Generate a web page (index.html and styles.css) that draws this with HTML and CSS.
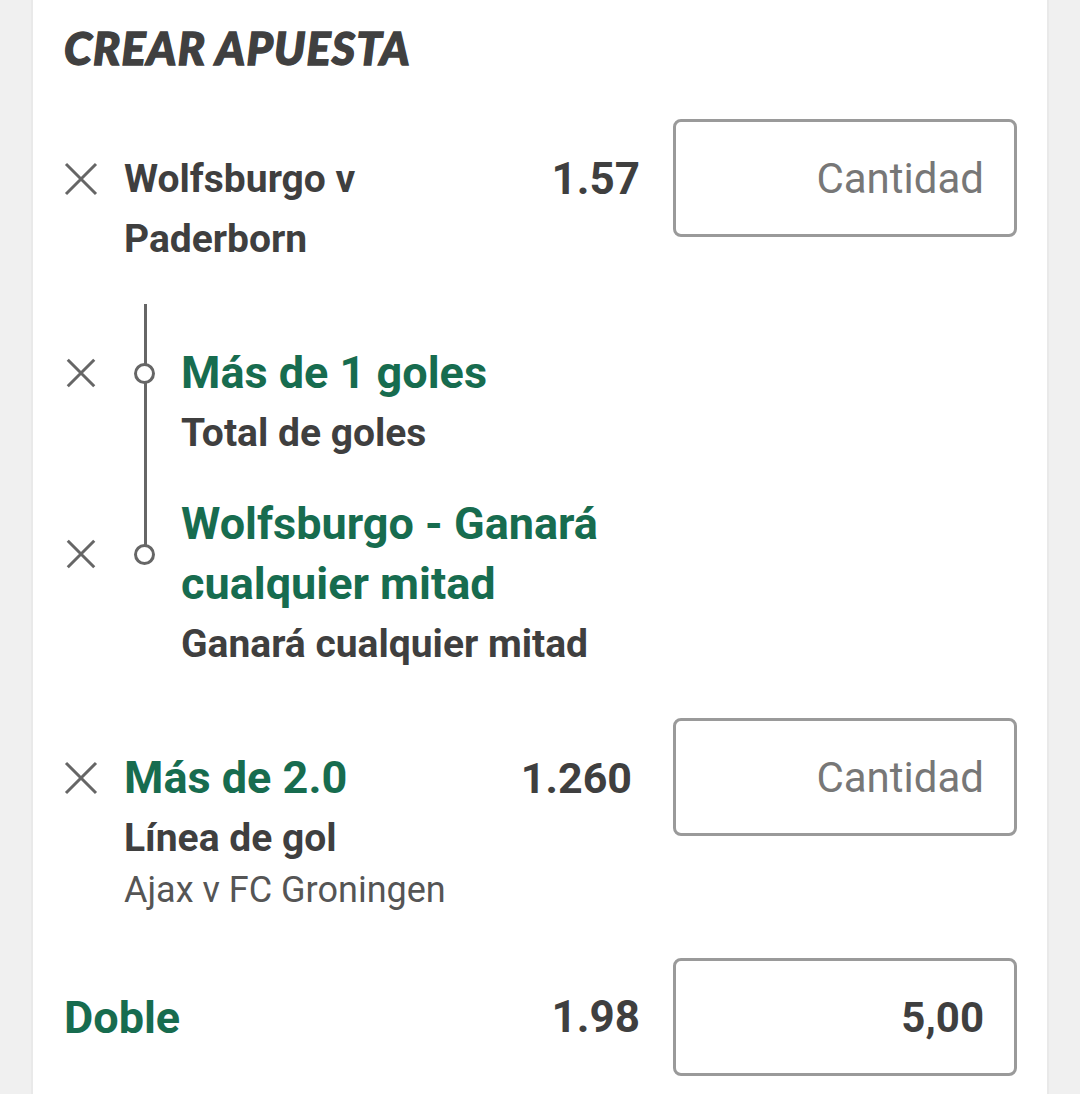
FILE: index.html
```html
<!DOCTYPE html>
<html lang="es">
<head>
    <meta charset="UTF-8">
    <meta name="viewport" content="width=device-width, initial-scale=1.0">
    <title>Crear apuesta</title>
    <link rel="stylesheet" href="styles.css">
</head>
<body>
    <div class="slip">
        <h1 class="slip-title">CREAR APUESTA</h1>

        <!-- Selección 1 -->
        <div class="bet">
            <button class="remove" type="button" aria-label="Quitar">
                <svg viewBox="0 0 34 34"><path d="M2 2 L32 32 M32 2 L2 32"/></svg>
            </button>
            <div class="bet-info">
                <div class="event">Wolfsburgo v Paderborn</div>
            </div>
            <div class="odds">1.57</div>
            <input class="stake" type="text" placeholder="Cantidad">
        </div>

        <div class="legs">
            <div class="leg">
                <button class="remove remove-sm" type="button" aria-label="Quitar">
                    <svg viewBox="0 0 34 34"><path d="M2 2 L32 32 M32 2 L2 32"/></svg>
                </button>
                <span class="node"></span>
                <div class="pick">Más de 1 goles</div>
                <div class="market">Total de goles</div>
            </div>
            <div class="leg">
                <button class="remove remove-sm" type="button" aria-label="Quitar">
                    <svg viewBox="0 0 34 34"><path d="M2 2 L32 32 M32 2 L2 32"/></svg>
                </button>
                <span class="node"></span>
                <div class="pick">Wolfsburgo - Ganará cualquier mitad</div>
                <div class="market">Ganará cualquier mitad</div>
            </div>
        </div>

        <!-- Selección 2 -->
        <div class="bet bet-second">
            <button class="remove" type="button" aria-label="Quitar">
                <svg viewBox="0 0 34 34"><path d="M2 2 L32 32 M32 2 L2 32"/></svg>
            </button>
            <div class="bet-info">
                <div class="pick">Más de 2.0</div>
                <div class="market">Línea de gol</div>
                <div class="match">Ajax v FC Groningen</div>
            </div>
            <div class="odds odds-long">1.260</div>
            <input class="stake" type="text" placeholder="Cantidad">
        </div>

        <!-- Combinada -->
        <div class="multiple">
            <div class="multiple-name">Doble</div>
            <div class="odds">1.98</div>
            <input class="stake stake-filled" type="text" value="5,00">
        </div>
    </div>
</body>
</html>
```

FILE: styles.css
```css
/* Page */
body {
    margin: 0;
    background: #f0f0f0;
    font-family: 'Roboto', 'Liberation Sans', sans-serif;
    color: #3f3f3f;
}

/* Bet slip panel */
.slip {
    background: #fff;
    margin: 0 33px;
    padding: 22px 30px 40px 31px;
    min-height: 1100px;
    box-sizing: border-box;
    box-shadow: 0 0 0 2px #e9e9e9;
}

.slip-title {
    margin: 0;
    font-family: 'Lato', 'Liberation Sans', sans-serif;
    font-style: italic;
    font-weight: 900;
    font-size: 45px;
    line-height: 52px;
    letter-spacing: 1.2px;
    color: #404040;
    -webkit-text-stroke: 1.4px #404040;
}

/* Selection rows */
.bet {
    display: grid;
    grid-template-columns: 60px 1fr auto 344px;
    align-items: start;
    margin-top: 45px;
}

.bet-second {
    margin-top: 44px;
}

.remove {
    border: none;
    background: none;
    padding: 0;
    width: 34px;
    height: 34px;
    margin-top: 43px;
    cursor: pointer;
}

.remove svg {
    display: block;
    width: 100%;
    height: 100%;
    fill: none;
    stroke: #666;
    stroke-width: 3;
}

.bet-info {
    margin-top: 30px;
    padding-right: 40px;
}

.event,
.market {
    font-size: 39px;
    font-weight: 700;
    line-height: 60px;
}

.pick {
    font-size: 45px;
    font-weight: 700;
    line-height: 60px;
    color: #176c4f;
}

.match {
    font-size: 36px;
    line-height: 44px;
    color: #555;
}

.odds {
    margin-top: 30px;
    margin-right: 33px;
    font-size: 44px;
    font-weight: 700;
    line-height: 60px;
    text-align: right;
}

.odds-long {
    margin-right: 41px;
    font-size: 43px;
}

.stake {
    width: 344px;
    height: 118px;
    box-sizing: border-box;
    border: 3px solid #9a9a9a;
    border-radius: 8px;
    padding: 0 30px;
    font-family: 'Roboto', 'Liberation Sans', sans-serif;
    font-size: 42px;
    text-align: right;
    color: #3f3f3f;
    background: #fff;
}

.stake::placeholder {
    color: #777;
}

.stake-filled {
    font-weight: 700;
}

/* Combined legs with connector */
.legs {
    position: relative;
    margin-top: 35px;
    padding-top: 39px;
    display: flex;
    flex-direction: column;
    gap: 31px;
}

.legs::before {
    content: "";
    position: absolute;
    left: 80px;
    top: 0;
    bottom: 117px;
    width: 3px;
    background: #666;
}

.leg {
    display: grid;
    grid-template-columns: 60px 57px 1fr;
    grid-template-rows: auto auto;
}

.leg .remove,
.leg .node {
    grid-row: 1;
    align-self: center;
}

.remove-sm {
    grid-column: 1;
    width: 30px;
    height: 30px;
    margin: 0 0 0 2px;
}

.remove-sm svg {
    stroke-width: 3.4;
}

.node {
    grid-column: 2;
    position: relative;
    z-index: 1;
    width: 15px;
    height: 15px;
    margin-left: 10px;
    border: 3px solid #666;
    border-radius: 50%;
    background: #fff;
}

.leg .pick,
.leg .market {
    grid-column: 3;
    max-width: 470px;
}

.leg .market {
    grid-row: 2;
}

/* Multiple bet row */
.multiple {
    display: grid;
    grid-template-columns: 1fr auto 344px;
    align-items: center;
    margin-top: 46px;
}

.multiple-name {
    font-size: 45px;
    font-weight: 700;
    color: #176c4f;
}

.multiple .odds {
    margin-top: 0;
}
```
